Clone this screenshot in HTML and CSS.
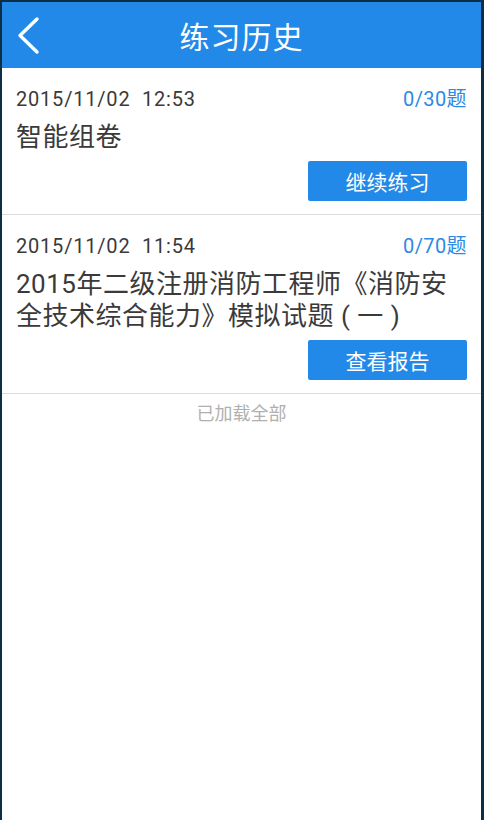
FILE: index.html
```html
<!DOCTYPE html>
<html lang="zh-CN">
<head>
    <meta charset="UTF-8">
    <meta name="viewport" content="width=device-width, initial-scale=1.0">
    <title>练习历史</title>
    <link rel="stylesheet" href="styles.css">
</head>
<body>

    <div class="app">
        <header class="topbar">
            <a href="#" class="back-button" aria-label="返回">
                <svg width="24" height="40" viewBox="0 0 24 40">
                    <polyline points="21,3 4,19.5 21,36" fill="none" stroke="#fff" stroke-width="3.4" stroke-linecap="round" stroke-linejoin="round"/>
                </svg>
            </a>
            <h1>练习历史</h1>
        </header>

        <ul class="record-list">
            <li class="record">
                <div class="record-meta">
                    <span class="record-date">2015/11/02&nbsp;&nbsp;12:53</span>
                    <span class="record-count">0/30题</span>
                </div>
                <div class="record-title">智能组卷</div>
                <div class="record-actions">
                    <a href="#" class="action-button">继续练习</a>
                </div>
            </li>
            <li class="record">
                <div class="record-meta">
                    <span class="record-date">2015/11/02&nbsp;&nbsp;11:54</span>
                    <span class="record-count">0/70题</span>
                </div>
                <div class="record-title">2015年二级注册消防工程师《消防安全技术综合能力》模拟试题 ( 一 )</div>
                <div class="record-actions">
                    <a href="#" class="action-button">查看报告</a>
                </div>
            </li>
        </ul>

        <p class="list-end">已加载全部</p>
    </div>

</body>
</html>
```

FILE: styles.css
```css
body {
    margin: 0;
    background-color: #0d2f45;
    font-family: Roboto, "Noto Sans CJK SC", sans-serif;
}

.app {
    margin: 2px 3px 0 2px;
    min-height: 818px;
    background-color: #fff;
}

/* barra superior */
.topbar {
    height: 66px;
    background-color: #2389e8;
    display: grid;
    grid-template-columns: 1fr auto 1fr;
    align-items: center;
}

.back-button {
    display: flex;
    padding-left: 14px;
    padding-top: 2px;
}

.topbar h1 {
    margin: 0;
    color: #fff;
    font-family: "Noto Sans CJK SC", sans-serif;
    font-size: 30px;
    font-weight: normal;
    letter-spacing: 1px;
}

/* lista */
.record-list {
    list-style: none;
    margin: 0;
    padding: 0;
}

.record {
    padding: 19px 14px 13px;
    border-bottom: 1px solid #dcdcdc;
}

.record-meta {
    display: flex;
    justify-content: space-between;
    font-size: 20px;
    line-height: 24px;
}

.record-date {
    color: #3a3a3a;
    letter-spacing: 0.8px;
}

.record-count {
    color: #2a8ae6;
    letter-spacing: 0.4px;
}

.record-title {
    margin-top: 10px;
    color: #3a3a3a;
    font-size: 26px;
    line-height: 32px;
    letter-spacing: 0.5px;
}

.record-actions {
    display: flex;
    justify-content: flex-end;
    margin-top: 8px;
}

.action-button {
    width: 159px;
    height: 40px;
    display: flex;
    align-items: center;
    justify-content: center;
    background-color: #2389e8;
    color: #fff;
    font-family: "Noto Sans CJK SC", sans-serif;
    font-size: 21px;
    text-decoration: none;
    border-radius: 2px;
}

.list-end {
    margin: 0;
    padding: 6px 0;
    text-align: center;
    color: #b0b0b0;
    font-family: "Noto Sans CJK SC", sans-serif;
    font-size: 18px;
    line-height: 24px;
}
```
